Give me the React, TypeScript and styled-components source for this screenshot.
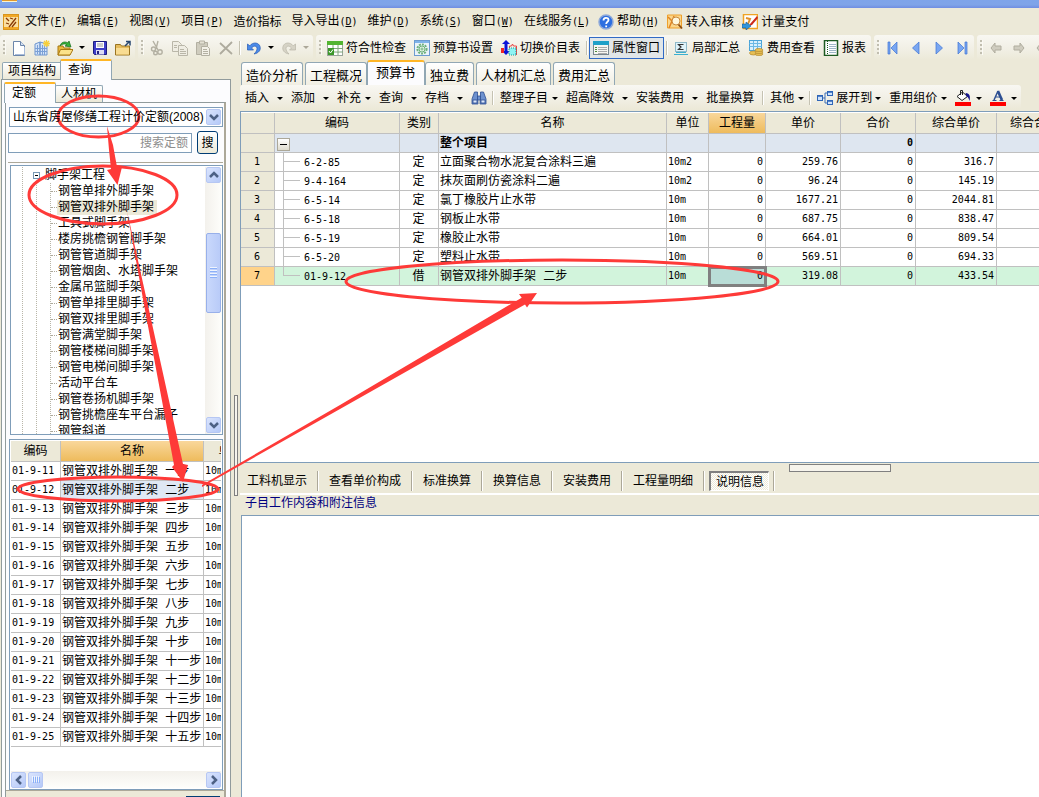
import React from "react";
import styled, { createGlobalStyle, css } from "styled-components";

const face = "#ece9d8";
const line = "#7f9db9";
const gridLine = "#c0c0c0";
const sans = `"Liberation Sans", "Noto Sans CJK SC", sans-serif`;
const mono = `"DejaVu Sans Mono", "Noto Sans CJK SC", monospace`;

const GlobalStyle = createGlobalStyle`
  * { box-sizing: border-box; }
  body { margin: 0; background: ${face}; overflow: hidden; }
  button, input, select { font: inherit; color: inherit; margin: 0; }
  button { background: none; border: 0; padding: 0; white-space: nowrap; }
  table { border-collapse: separate; border-spacing: 0; table-layout: fixed; }
  ul { list-style: none; margin: 0; padding: 0; }
`;

const Window = styled.div`
  position: relative;
  display: flex;
  flex-direction: column;
  height: 100vh;
  overflow: hidden;
  background: ${face};
  color: #000;
  font: 12px/16px ${sans};
  white-space: nowrap;
`;

const TitleBar = styled.div`
  flex: none;
  height: 8px;
  padding-left: 2px;
  background: linear-gradient(#7ea4ea, #7fa4e8 60%, #6f8de2);
`;

const TitleIcon = styled.div`
  width: 15px;
  height: 2px;
  background: #e39a2c;
  border-bottom: 1px solid #fff3c8;
`;

const MenuBar = styled.nav`
  flex: none;
  display: flex;
  align-items: center;
  gap: 10px;
  height: 27px;
  padding: 0 0 0 3px;
`;

const MenuIcon = styled.span`
  display: flex;
  width: 16px;
  margin-right: -4px;
`;

const MenuItem = styled.button<{ $icon?: boolean }>`
  display: flex;
  align-items: center;
  gap: 3px;
  margin-left: ${(p) => (p.$icon ? "-2px" : "0")};
`;

const Key = styled.span`
  font: 10px/16px ${mono};
  u { text-underline-offset: 1px; }
`;

const ToolBars = styled.div`
  flex: none;
  display: flex;
  gap: 3px;
  height: 25px;
`;

const raised = css`
  background: linear-gradient(#f8f7f2, #f1efe4 60%, ${face});
  border-radius: 3px;
`;

const ToolGroup = styled.div`
  ${raised}
  flex: none;
  display: flex;
  align-items: center;
  height: 25px;
  padding-right: 1px;
`;

const Grip = styled.span`
  width: 3px;
  height: 15px;
  margin: 0 1px 0 3px;
  background: repeating-linear-gradient(#c1beb0 0 2px, transparent 2px 4px);
  border-right: 1px solid #fbfaf5;
`;

const IconButton = styled.button`
  display: flex;
  justify-content: center;
  align-items: center;
  width: 23px;
  height: 23px;
`;

const CaretButton = styled.button`
  display: flex;
  justify-content: center;
  width: 12px;
`;

const LabelButton = styled.button<{ $on?: boolean }>`
  display: flex;
  align-items: center;
  gap: 3px;
  height: 22px;
  padding: 0 4px;
  ${(p) => p.$on && css`
    padding: 0 3px;
    background: #e1e6e8;
    border: 1px solid #316ac5;
  `}
`;

const Separator = styled.span`
  flex: none;
  width: 2px;
  height: 14px;
  margin: 0 1px 0 2px;
  background: #c5c2b2;
  border-right: 1px solid #fff;
`;

const Triangle = styled.span<{ $dim?: boolean }>`
  border: 3px solid transparent;
  border-top-color: ${(p) => (p.$dim ? "#aca899" : "#000")};
  border-bottom: 0;
`;

const Body = styled.main`
  flex: 1;
  display: flex;
  min-height: 0;
`;

const Left = styled.section`
  flex: none;
  display: flex;
  flex-direction: column;
  width: 231px;
`;

const TabRow = styled.div<{ $h: number; $pad: number }>`
  flex: none;
  display: flex;
  align-items: flex-end;
  height: ${(p) => p.$h}px;
  padding-left: ${(p) => p.$pad}px;
`;

const SideTab = styled.button<{ $on?: boolean; $tall?: boolean }>`
  height: 17px;
  padding: 0 5px;
  line-height: 16px;
  border: 1px solid #91a7b4;
  border-bottom: 0;
  border-radius: 2px 2px 0 0;
  background: linear-gradient(#fff, ${face});
  ${(p) => p.$on && css`
    position: relative;
    height: 21px;
    margin: 0 -1px -1px -2px;
    padding: 0 19px 1px 7px;
    background: #fcfcfe;
    border-top: 2px solid #ffb626;
  `}
`;

const SidePanel = styled.div`
  flex: 1;
  display: flex;
  flex-direction: column;
  min-height: 0;
  margin-left: 1px;
  padding: 0 4px 0 3px;
  border: 1px solid #919b9c;
  border-bottom: 0;
  background: #fcfcfe;
`;

const InnerPanel = styled.div`
  flex: 1;
  display: flex;
  flex-direction: column;
  min-height: 0;
  padding: 4px 1px 0 3px;
  border: 1px solid #919b9c;
  border-right: 2px solid #aca899;
  border-bottom: 0;
`;

const Combo = styled.div`
  flex: none;
  display: grid;
  grid-template-columns: 1fr 17px;
  height: 20px;
  border: 1px solid ${line};
  background: #fff;
  select {
    grid-area: 1 / 1 / 2 / 3;
    appearance: none;
    border: 0;
    padding: 0 18px 0 3px;
    background: transparent;
    z-index: 1;
  }
  span { grid-area: 1 / 2 / 2 / 3; margin: 1px; }
`;

const ScrollButton = styled.span`
  flex: none;
  display: flex;
  align-items: center;
  justify-content: center;
  width: 15px;
  height: 16px;
  border: 1px solid #b6c7f3;
  border-radius: 2px;
  background: linear-gradient(135deg, #dae4fd, #b5c9f8);
`;

const SearchRow = styled.div`
  flex: none;
  display: flex;
  align-items: center;
  gap: 5px;
  height: 23px;
  margin: 4px 5px 8px -1px;
  input {
    flex: 1;
    min-width: 0;
    height: 20px;
    padding: 0 3px;
    border: 1px solid ${line};
    background: #fff;
    text-align: right;
  }
  input::placeholder { color: #8e8e8e; opacity: 1; }
  button {
    width: 21px;
    height: 23px;
    border: 1px solid #003c74;
    border-radius: 3px;
    background: linear-gradient(#fff, ${face});
  }
`;

const TreeBox = styled.div`
  flex: 0 1 270px;
  display: flex;
  min-height: 0;
  margin: 2px 0 0 1px;
  padding-top: 1px;
  border: 1px solid ${line};
  background: #fff;
`;

const SideDivider = styled.div`
  flex: none;
  height: 1px;
  margin-left: -1px;
  background: #aca899;
`;

const dots = "repeating-linear-gradient(#b9b6a8 0 1px, transparent 1px 2px)";

const Tree = styled.ul`
  flex: 1;
  overflow: hidden;
  background: ${dots} 11px 0 / 1px 100% no-repeat, ${dots} 25px 16px / 1px 100% no-repeat, ${dots} 39px 16px / 1px 100% no-repeat;
`;

const TreeNode = styled.li<{ $root?: boolean }>`
  display: flex;
  align-items: center;
  height: 16px;
  padding-left: ${(p) => (p.$root ? 22 : 40)}px;
  ${(p) => !p.$root && css`
    &::before { content: ""; width: 6px; border-top: 1px dotted #aca899; }
  `}
`;

const NodeLabel = styled.span<{ $on?: boolean }>`
  height: 15px;
  line-height: 15px;
  padding: 0 3px 0 1px;
  background: ${(p) => (p.$on ? face : "transparent")};
`;

const Toggle = styled.span`
  display: flex;
  align-items: center;
  justify-content: center;
  width: 7px;
  height: 7px;
  margin-right: 5px;
  border: 1px solid #7898b5;
  background: #fff;
  &::before { content: ""; width: 3px; height: 1px; background: #000; }
`;

const VScroll = styled.div`
  flex: none;
  display: flex;
  flex-direction: column;
  justify-content: space-between;
  align-items: center;
  width: 17px;
  padding-bottom: 1px;
  background: linear-gradient(90deg, #f3f1ec, #fefefb);
`;

const VThumb = styled.span`
  display: flex;
  flex-direction: column;
  align-items: center;
  justify-content: center;
  gap: 1px;
  width: 15px;
  height: 80px;
  margin-top: -55px;
  border: 1px solid #98b0ea;
  border-radius: 2px;
  background: linear-gradient(90deg, #c9d8fc, #b9cbf8);
  i { width: 7px; height: 1px; background: #eef4fe; border-bottom: 1px solid #8cb0f8; box-sizing: content-box; }
`;

const ListBox = styled.div`
  flex: 1;
  display: flex;
  flex-direction: column;
  min-height: 0;
  margin-top: 4px;
  border: 1px solid ${line};
  padding: 1px;
  background: #fff;
`;

const ListView = styled.div`
  flex: 1;
  min-height: 0;
  overflow: hidden;
`;

const HScroll = styled.div`
  flex: none;
  display: flex;
  height: 17px;
  align-items: center;
  gap: 2px;
  background: linear-gradient(#f3f1ec, #fefefb);
  ${ScrollButton}:last-child { margin-left: auto; }
`;

const BottomStrip = styled.div`
  flex: none;
  display: flex;
  align-items: flex-end;
  justify-content: flex-end;
  height: 7px;
  margin: 0 -1px 0 -3px;
  padding-right: 4px;
  background: ${face};
  border-top: 1px solid #aca899;
  &::after { content: ""; width: 34px; height: 1px; background: #003c74; }
`;

const Table = styled.table`
  width: 0;
  min-width: 100%;
`;

const Th = styled.th<{ $on?: boolean }>`
  height: 21px;
  padding: 0;
  overflow: hidden;
  font-weight: 400;
  text-align: center;
  border: 0 solid ${gridLine};
  border-width: 0 1px 1px 0;
  background: ${(p) => (p.$on ? "linear-gradient(#f9d79b, #eebb5c)" : face)};
`;

const Td = styled.td<{ $mono?: boolean; $right?: boolean; $center?: boolean; $tone?: string; $focus?: boolean; $bold?: boolean }>`
  height: 19px;
  padding: 2px 2px 0 1px;
  overflow: hidden;
  border: 0 solid ${gridLine};
  border-width: 0 1px 1px 0;
  font: 12px/16px "Liberation Mono", "Noto Sans CJK SC", monospace;
  text-align: ${(p) => (p.$right ? "right" : p.$center ? "center" : "left")};
  background: ${(p) => p.$tone ?? "#fff"};
  ${(p) => p.$mono && css`
    padding-top: 0;
    font: 10px/16px ${mono};
  `}
  ${(p) => p.$bold && css`font-weight: 700;`}
  ${(p) => p.$focus && css`
    outline: 3px solid #808080;
    outline-offset: -2px;
  `}
`;

const VSplitter = styled.div`
  flex: none;
  width: 9px;
  padding: 335px 2px 0 3px;
  &::before {
    content: "";
    display: block;
    height: 99px;
    border: 1px solid #808080;
    background: #f6f4ec;
  }
`;

const Right = styled.section`
  flex: 1;
  display: flex;
  flex-direction: column;
  min-width: 0;
`;

const MainTabs = styled.div`
  flex: none;
  display: flex;
  align-items: flex-end;
  gap: 2px;
  height: 25px;
  padding-left: 1px;
`;

const MainTab = styled.button<{ $on?: boolean }>`
  height: 23px;
  padding: 3px 4px 0;
  font-size: 13px;
  border: 1px solid #91a7b4;
  border-bottom: 0;
  border-radius: 3px 3px 0 0;
  background: linear-gradient(#fff, #f0eee2);
  ${(p) => p.$on && css`
    height: 25px;
    margin: 0 -2px;
    padding: 0 9px 1px 8px;
    background: #fcfcfe;
    border-top: 2px solid #ffb626;
  `}
`;

const EditBar = styled.div`
  ${raised}
  flex: none;
  align-self: flex-start;
  display: flex;
  align-items: center;
  gap: 8px;
  height: 24px;
  margin-bottom: 2px;
  padding: 2px 4px 0 5px;
`;

const EditButton = styled.button<{ $gap?: number }>`
  display: flex;
  align-items: center;
  gap: ${(p) => p.$gap ?? 8}px;
`;

const BarRule = styled.span<{ $tight?: boolean }>`
  flex: none;
  width: 2px;
  height: 14px;
  margin: 0 -2px 0 ${(p) => (p.$tight ? "-3px" : "0")};
  background: #c5c2b2;
  border-right: 1px solid #fff;
`;

const IconLabel = styled.span`
  display: flex;
  align-items: center;
  gap: 3px;
`;

const GridArea = styled.div`
  flex: 1 1 352px;
  min-height: 0;
  overflow: hidden;
  padding-top: 1px;
  border: 1px solid ${line};
  border-right: 0;
  background: #fff;
`;

const CodeCell = styled.div`
  display: flex;
  align-items: center;
  height: 18px;
  padding: 2px 0 0 7px;
`;

const Branch = styled.span<{ $last?: boolean }>`
  align-self: flex-start;
  width: 17px;
  height: ${(p) => (p.$last ? 9 : 18)}px;
  margin: -2px 4px 0 0;
  border-left: 1px solid ${gridLine};
  background: linear-gradient(${gridLine}, ${gridLine}) 0 8px / 100% 1px no-repeat;
`;

const Collapse = styled.button`
  display: flex;
  align-items: center;
  justify-content: center;
  width: 13px;
  height: 13px;
  margin-left: 1px;
  border: 1px solid #aca899;
  background: linear-gradient(#fff, #dedbcd);
  &::before { content: ""; width: 7px; height: 1px; background: #000; }
`;

const Lower = styled.div`
  flex: 1 1 334px;
  display: flex;
  flex-direction: column;
  min-height: 0;
`;

const HSplitter = styled.div`
  flex: none;
  height: 8px;
  padding: 1px 0 0 549px;
  &::before {
    content: "";
    display: block;
    width: 100px;
    height: 6px;
    border: 1px solid #808080;
    background: #f6f4ec;
  }
`;

const InfoTabs = styled.div`
  flex: none;
  display: flex;
  align-items: center;
  height: 24px;
  padding: 0 0 4px;
  margin-left: -3px;
`;

const InfoTab = styled.button<{ $on?: boolean }>`
  height: 20px;
  padding: 0 10px;
  ${(p) => p.$on && css`
    margin: 0 4px;
    padding: 1px 4px 0 5px;
    border: 1px solid #fff;
    border-top: 2px solid #808080;
    border-left: 2px solid #808080;
    background: repeating-conic-gradient(#fff 0 25%, ${face} 0 50%) 0 0 / 2px 2px;
  `}
`;

const InfoRule = styled.span`
  width: 2px;
  height: 20px;
  background: #aca899;
  border-right: 1px solid #fff;
`;

const InfoTitle = styled.div`
  flex: none;
  height: 20px;
  padding: 0 0 0 5px;
  margin-top: -2px;
  box-sizing: content-box;
  border-top: 2px solid #fff;
  color: #000080;
`;

const InfoBody = styled.div`
  flex: 1;
  margin-left: 1px;
  border: 1px solid ${line};
  border-width: 1px 0 0 1px;
  background: #fff;
`;

const Marks = styled.svg`
  position: absolute;
  top: 0;
  left: 0;
  pointer-events: none;
`;

const icons: Record<string, React.ReactNode> = {
  app: <><rect x="0.5" y="0.5" width="15" height="15" fill="#fbe0a0" stroke="#d9951c" /><path d="M1 1h14v2H1zM1 13h14v2H1z" fill="#f2a826" /><path d="M3 4l3 3M6 13l7-9M7 4l3 1M9 13l4-5M3 9l3 1" stroke="#8a3a06" strokeWidth="1.300" /></>,
  file: <><path d="M2.5 1.5h7l4 4v10h-11z" fill="#fff" stroke="#6c86ab" /><path d="M9.500 1.500v4h4" fill="#d4e0f2" stroke="#6c86ab" /><path d="M4 14.500h9.500V7" fill="none" stroke="#a9bcda" /></>,
  building: <><path d="M1 4l5-2v13H1zM6 2l7 2v11H6z" fill="#d3e3f8" stroke="#6f96cf" /><path d="M3.500 5v9M8.500 5v10M10.500 5v10M1 8.500h12M1 11.500h12" stroke="#7ba0d6" /><path d="M12.500 0v7M9 3.500h7M10 1l5 5M15 1l-5 5" stroke="#f6cf3a" strokeWidth="1.300" /></>,
  open: <><path d="M1 6h5l1 2h6v7H1z" fill="#e8b93e" stroke="#a97812" /><path d="M3.500 9.500H16L13 15H1z" fill="#fbe28a" stroke="#a97812" /><path d="M3 6c1-4 5-5 8-3l1-2 2 6-6-1 2-1c-2-2-5-1-7 1z" fill="#37b53a" stroke="#146b18" strokeWidth=".7" /></>,
  save: <><path d="M1.500 1.500h13v13h-12l-1-1z" fill="#3e3ec8" stroke="#1d1d80" /><rect x="4" y="2" width="8" height="6" fill="#fff" /><path d="M5 4h6M5 6h6" stroke="#999" /><rect x="4" y="10" width="8" height="4.500" fill="#dcdcf4" /><rect x="5" y="11" width="2" height="3" fill="#222280" /></>,
  folder: <><path d="M.5 4.500h5l1 1.500h8v9H.5z" fill="#e6bc5c" stroke="#9a7420" /><path d="M1 8h13v6.500H1z" fill="#f8dc92" /><path d="M10 6l4-4m-3-.5h4v4" fill="none" stroke="#27476f" strokeWidth="1.500" /></>,
  cut: <g fill="none" stroke="#b3b0a2" strokeWidth="1.400"><path d="M4 1l5 9M9 1L7 9" /><circle cx="4.500" cy="9" r="2" /><circle cx="11" cy="12" r="2.200" /><circle cx="6.500" cy="13" r="1.800" /></g>,
  copy: <g fill="#efede3" stroke="#b9b6a8"><path d="M.5 1.500h6l3 3v7h-9z" /><path d="M6.500 5.500h6l3 3v7h-9z" /><path d="M8 9.500h4M8 11.500h6M8 13.500h6M2 5.500h3M2 7.500h3" /></g>,
  paste: <g fill="#e4e1d4" stroke="#b3b0a2"><path d="M1.500 2.500h11v12h-11z" fill="#cfccbe" /><path d="M4.500 1h5v3h-5z" /><path d="M6.500 6.500h6l2 2v7h-8z" fill="#f3f1e8" /><path d="M8 9.500h4M8 11.500h5M8 13.500h5" /></g>,
  del: <path d="M2 3l12 11M14 2L2 14" stroke="#aeab9e" strokeWidth="1.800" />,
  undo: <path d="M1.500 4v6h6L5.500 8C8 5 11 6 11 8.500c0 2-1 3.500-3 5.500 5-1 7-4 6-7.500C13 2.500 7 1.500 3.800 5.800z" fill="#4b8ae8" stroke="#2459b4" strokeWidth=".7" />,
  redo: <path d="M14.500 4v6h-6l2-2C8 5 5 6 5 8.500c0 2 1 3.500 3 5.500C3 13 1 10 2 6.500 3 2.500 9 1.500 12.200 5.800z" fill="#d6d3c6" stroke="#b9b6a8" strokeWidth=".7" />,
  check: <><rect x=".5" y="1.500" width="15" height="14" fill="#fff" stroke="#9aa59a" /><path d="M0 1h16v4H0z" fill="#52b431" /><path d="M6 5v10M11 5v10M6 8.500h10M6 12h10" stroke="#7fa77b" /><rect x="1" y="8" width="6" height="7" fill="#3c982a" /><path d="M2 11l1.500 2L6 9.500" fill="none" stroke="#fff" /></>,
  gear: <><rect x=".5" y=".5" width="15" height="15" fill="#eaf3fa" stroke="#6d9bd0" /><path d="M1 1h14v2H1z" fill="#7fb3ea" /><circle cx="8" cy="9" r="4.600" fill="none" stroke="#6fb27c" strokeWidth="2" strokeDasharray="2 1" /><circle cx="8" cy="9" r="3" fill="#e3f2e4" stroke="#6fb27c" /><circle cx="8" cy="9" r="1" fill="#fff" stroke="#6fb27c" /></>,
  swap: <><path d="M5 0l4 4H6.500v7H9l-4 4-4-4h2.500V4H1z" fill="#0a14d8" /><path d="M0 8h3v5H0z" fill="#ee2525" /><path d="M8.500 8V6h2l1-2 1 2h3v9" fill="none" stroke="#e84545" /><path d="M8 8h7v7H8z" fill="#8ff3f3" stroke="#139a9a" strokeDasharray="1 1" /></>,
  props: <><rect x=".5" y="1.500" width="15" height="13" fill="#f6f6f2" stroke="#7a8790" /><path d="M0 1h16v4H0z" fill="#1fa0c8" /><path d="M2 7.500h2M2 9.500h2M2 11.500h2" stroke="#4a8a3c" /><path d="M5 7.500h9M5 9.500h9M5 11.500h9M5 13.500h9" stroke="#aaa" /></>,
  sum: <><rect x="2.500" y="2.500" width="11" height="9" fill="#dff3fa" stroke="#8fb9c9" /><path d="M10.500 4.500h-5L8 7l-2.500 2.500h5" fill="none" stroke="#333" strokeWidth="1.200" /><path d="M1 14.500h14M3 12.500h10" stroke="#3bb0d0" /></>,
  coins: <><rect x="1.500" y=".5" width="12" height="10" fill="#d8effc" stroke="#4aa3d8" /><path d="M1.500 3.500h12M1.500 6.500h12M5.500 1v9M9.500 1v9" stroke="#6cb8e4" /><g fill="#e6bf55" stroke="#b58b30" strokeWidth=".7"><ellipse cx="5.500" cy="13" rx="4" ry="2" /><ellipse cx="11" cy="14" rx="4" ry="1.600" /><ellipse cx="11" cy="12" rx="4" ry="1.600" /><ellipse cx="11" cy="10" rx="4" ry="1.600" /></g></>,
  report: <><rect x="1.500" y=".5" width="13" height="15" fill="#fff" stroke="#1d5a22" strokeWidth="1.500" /><path d="M4.500 1v14" stroke="#1d5a22" strokeDasharray="1 1" /><path d="M6 4.500h7M6 6.500h7M6 8.500h7M6 10.500h7M6 12.500h7" stroke="#9fb6c8" /></>,
  first: <path d="M3 2h2v12H3zM12 2v12L6 8z" fill="#79a6f2" stroke="#3f74d2" strokeWidth=".7" />,
  prev: <path d="M11 2v12L4.500 8z" fill="#79a6f2" stroke="#3f74d2" strokeWidth=".7" />,
  next: <path d="M5 2v12l6.500-6z" fill="#79a6f2" stroke="#3f74d2" strokeWidth=".7" />,
  last: <path d="M11 2h2v12h-2zM4 2v12l6-6z" fill="#79a6f2" stroke="#3f74d2" strokeWidth=".7" />,
  back: <path d="M3 8l4-5v3h6v4H7v3z" fill="#cfccbf" stroke="#b0ad9f" />,
  fwd: <path d="M13 8L9 3v3H3v4h6v3z" fill="#cfccbf" stroke="#b0ad9f" />,
  help: <><circle cx="8" cy="8" r="7" fill="#2d6fe0" stroke="#8fa9d8" strokeWidth="1.500" /><path d="M5.500 6.500C5.500 3 10.500 3 10.500 6c0 1.800-2.300 1.800-2.300 4M8.200 11.500v1.700" fill="none" stroke="#fff" strokeWidth="1.800" /></>,
  audit: <><path d="M.5 1h14v13H.5z" fill="#fbd68a" stroke="#efa02a" /><path d="M1 3l4 4-3 7M7 2L5 8" fill="none" stroke="#e08422" strokeWidth="1.500" /><circle cx="9" cy="7" r="4" fill="#fff7dc" stroke="#c98a3c" /><path d="M11.500 10.500l3.500 4" stroke="#8b4c12" strokeWidth="1.800" /></>,
  pay: <><rect x="1.500" y=".5" width="14" height="14" fill="#fff" stroke="#f0a322" strokeWidth="1.500" /><path d="M4 4l4 1-2 5" fill="none" stroke="#e0902c" strokeWidth="2" /><path d="M15 2l-7 8-1 2 3-1 6-7z" fill="#cc2a1c" /><path d="M0 10h4V8l5 4-5 4v-2H0z" fill="#2f95dc" stroke="#14588f" strokeWidth=".6" /></>,
  find: <g fill="#6d91cf" stroke="#2d4f92" strokeWidth=".8"><path d="M3.500 2h3v4l.5 8H1V9zM12.500 2h-3v4L9 14h6V9z" /><path d="M6.500 6h3v4h-3z" /><path d="M2 10h4v3H2zM10 10h4v3h-4z" fill="#dbe7fb" /></g>,
  expand: <><path d="M5 8h3M8 3v10M8 3h3M8 13h3" stroke="#3d6fb8" fill="none" /><g fill="#cfe2fb" stroke="#2f66b8"><rect x=".5" y="5.500" width="5" height="5" /><rect x="10.500" y="1.500" width="5" height="4" /><rect x="10.500" y="10.500" width="5" height="4" /></g><path d="M1 6h5M10 2h6M10 11h6" stroke="#2f66b8" strokeWidth="1.500" /></>,
  fill: <><path d="M2 6.500L7.500 2l5 4.500-5.500 4z" fill="#fff" stroke="#222" /><path d="M5.500 5V.5h2V5" fill="none" stroke="#222" /><path d="M10.500 3c4.500 0 5 4 4 8-1-3-1.500-4-3-4.500z" fill="#14148c" /><path d="M0 12h16v4H0z" fill="#f00" /></>,
  font: <><path d="M8 1L4 10M7.500 1l4 9" stroke="#2d4f92" strokeWidth="1.500" /><path d="M8 1l4 9" stroke="#2d4f92" strokeWidth="2.500" /><path d="M5.500 7h5M2.500 10.500h4M9.500 10.500h4" stroke="#2d4f92" /><path d="M0 12h16v4H0z" fill="#f00" /></>,
};

const Icon = ({ name }: { name: string }) => (
  <svg width="16" height="16" viewBox="0 0 16 16" aria-hidden="true">{icons[name]}</svg>
);

const chevrons = { down: "M1 3l4 4 4-4", up: "M1 7l4-4 4 4", left: "M7 1L3 5l4 4", right: "M3 1l4 4-4 4" };
const Chevron = ({ dir }: { dir: keyof typeof chevrons }) => (
  <svg width="10" height="10" aria-hidden="true"><path d={chevrons[dir]} fill="none" stroke="#4d6185" strokeWidth="2.500" /></svg>
);

const menus: { label: string; key?: string; icon?: string }[] = [
  { label: "文件", key: "F" }, { label: "编辑", key: "E" }, { label: "视图", key: "V" }, { label: "项目", key: "P" },
  { label: "造价指标" }, { label: "导入导出", key: "D" }, { label: "维护", key: "D" }, { label: "系统", key: "S" },
  { label: "窗口", key: "W" }, { label: "在线服务", key: "L" }, { label: "帮助", key: "H", icon: "help" },
  { label: "转入审核", icon: "audit" }, { label: "计量支付", icon: "pay" },
];

const treeNodes = [
  "钢管单排外脚手架", "钢管双排外脚手架", "工具式脚手架", "楼房挑檐钢管脚手架", "钢管管道脚手架", "钢管烟囱、水塔脚手架",
  "金属吊篮脚手架", "钢管单排里脚手架", "钢管双排里脚手架", "钢管满堂脚手架", "钢管楼梯间脚手架", "钢管电梯间脚手架",
  "活动平台车", "钢管卷扬机脚手架", "钢管挑檐座车平台漏子", "钢管斜道",
];

const steps = ["一", "二", "三", "四", "五", "六", "七", "八", "九", "十", "十一", "十二", "十三", "十四", "十五"];

const columns: [string, number][] = [
  ["", 34], ["编码", 125], ["类别", 39], ["名称", 228], ["单位", 42], ["工程量", 57], ["单价", 75], ["合价", 75], ["综合单价", 81], ["综合合价", 75],
];

const items = [
  ["6-2-85", "定", "立面聚合物水泥复合涂料三遍", "10m2", "259.76", "316.7"],
  ["9-4-164", "定", "抹灰面刷仿瓷涂料二遍", "10m2", "96.24", "145.19"],
  ["6-5-14", "定", "氯丁橡胶片止水带", "10m", "1677.21", "2044.81"],
  ["6-5-18", "定", "钢板止水带", "10m", "687.75", "838.47"],
  ["6-5-19", "定", "橡胶止水带", "10m", "664.01", "809.54"],
  ["6-5-20", "定", "塑料止水带", "10m", "569.51", "694.33"],
  ["01-9-12", "借", "钢管双排外脚手架 二步", "10m", "319.08", "433.54"],
];

const Tool = ({ name, label }: { name: string; label: string }) => (
  <IconButton aria-label={label}><Icon name={name} /></IconButton>
);
const Caret = ({ dim }: { dim?: boolean }) => (
  <CaretButton aria-label="更多"><Triangle $dim={dim} /></CaretButton>
);
const Labelled = ({ name, text, on }: { name: string; text: string; on?: boolean }) => (
  <LabelButton $on={on}><Icon name={name} />{text}</LabelButton>
);
const Drop = ({ text, gap }: { text: string; gap?: number }) => (
  <EditButton $gap={gap}>{text}<Triangle /></EditButton>
);

const BudgetGrid = () => {
  const head = "#dee6f0";
  return (
    <Table>
      <colgroup>{columns.map(([n, w]) => <col key={n} width={w} />)}</colgroup>
      <thead>
        <tr>{columns.map(([n]) => <Th key={n} $on={n === "工程量"}>{n}</Th>)}</tr>
      </thead>
      <tbody>
        <tr>
          <Td $tone={face} />
          <Td $tone={head}><Collapse aria-label="折叠" /></Td>
          <Td $tone={head} />
          <Td $tone={head} $bold>整个项目</Td>
          <Td $tone={head} /><Td $tone={head} /><Td $tone={head} />
          <Td $tone={head} $mono $right $bold>0</Td>
          <Td $tone={head} /><Td $tone={head} />
        </tr>
        {items.map(([code, kind, name, unit, price, total], i) => {
          const last = i === items.length - 1;
          const tone = last ? "#d2f4dc" : "#fff";
          return (
            <tr key={code}>
              <Td $mono $center $tone={last ? "#ffd38a" : face}>{i + 1}</Td>
              <Td $mono $tone={tone}><CodeCell><Branch $last={last} />{code}</CodeCell></Td>
              <Td $center $tone={tone}>{kind}</Td>
              <Td $tone={tone}>{name}</Td>
              <Td $mono $tone={tone}>{unit}</Td>
              <Td $mono $right $tone={last ? "#b9ddd7" : tone} $focus={last}>0</Td>
              <Td $mono $right $tone={tone}>{price}</Td>
              <Td $mono $right $tone={tone}>0</Td>
              <Td $mono $right $tone={tone}>{total}</Td>
              <Td $tone={tone} />
            </tr>
          );
        })}
      </tbody>
    </Table>
  );
};

const Sidebar = () => (
  <Left>
    <TabRow $h={19} $pad={2}>
      <SideTab>项目结构</SideTab>
      <SideTab $on>查询</SideTab>
    </TabRow>
    <SidePanel>
      <TabRow $h={22} $pad={1}>
        <SideTab $on>定额</SideTab>
        <SideTab>人材机</SideTab>
      </TabRow>
      <InnerPanel>
        <Combo>
          <select aria-label="定额库"><option>山东省房屋修缮工程计价定额(2008)</option></select>
          <ScrollButton><Chevron dir="down" /></ScrollButton>
        </Combo>
        <SearchRow>
          <input aria-label="搜索定额" placeholder="搜索定额" />
          <button>搜</button>
        </SearchRow>
        <SideDivider />
        <TreeBox>
          <Tree>
            <TreeNode $root><Toggle />脚手架工程</TreeNode>
            {treeNodes.map((n, i) => <TreeNode key={n}><NodeLabel $on={i === 1}>{n}</NodeLabel></TreeNode>)}
          </Tree>
          <VScroll>
            <ScrollButton><Chevron dir="up" /></ScrollButton>
            <VThumb><i /><i /><i /><i /></VThumb>
            <ScrollButton><Chevron dir="down" /></ScrollButton>
          </VScroll>
        </TreeBox>
        <ListBox>
          <ListView>
            <Table>
              <colgroup><col width={50} /><col width={143} /><col width={54} /></colgroup>
              <thead><tr><Th>编码</Th><Th $on>名称</Th><Th>单位</Th></tr></thead>
              <tbody>
                {steps.map((s, i) => (
                  <tr key={s}>
                    <Td $mono>01-9-{i + 11}</Td>
                    <Td $tone={i === 1 ? "#dfe8f4" : undefined}>钢管双排外脚手架 {s}步</Td>
                    <Td $mono>10m</Td>
                  </tr>
                ))}
              </tbody>
            </Table>
          </ListView>
          <HScroll>
            <ScrollButton><Chevron dir="left" /></ScrollButton>
            <ScrollButton>
              <svg width="8" height="7" aria-hidden="true"><path d="M.5 0v6M2.500 0v6M4.500 0v6M6.500 0v6" stroke="#eef4fe" /><path d="M1.500 1v6M3.500 1v6M5.500 1v6M7.500 1v6" stroke="#8cb0f8" /></svg>
            </ScrollButton>
            <ScrollButton><Chevron dir="right" /></ScrollButton>
          </HScroll>
        </ListBox>
        <BottomStrip />
      </InnerPanel>
    </SidePanel>
  </Left>
);

const infoTabs = ["工料机显示", "查看单价构成", "标准换算", "换算信息", "安装费用", "工程量明细", "说明信息"];

export default function App() {
  return (
    <Window>
      <GlobalStyle />
      <TitleBar><TitleIcon /></TitleBar>
      <MenuBar>
        <MenuIcon><Icon name="app" /></MenuIcon>
        {menus.map((m) => (
          <MenuItem key={m.label} $icon={!!m.icon}>
            {m.icon && <Icon name={m.icon} />}
            <span>{m.label}{m.key && <Key>(<u>{m.key}</u>)</Key>}</span>
          </MenuItem>
        ))}
      </MenuBar>
      <ToolBars>
        <ToolGroup>
          <Grip /><Tool name="file" label="新建" /><Tool name="building" label="新建项目" /><Tool name="open" label="打开" /><Caret />
          <Tool name="save" label="保存" /><Tool name="folder" label="目录" />
        </ToolGroup>
        <ToolGroup>
          <Grip /><Tool name="cut" label="剪切" /><Tool name="copy" label="复制" /><Tool name="paste" label="粘贴" /><Tool name="del" label="删除" />
          <Separator /><Tool name="undo" label="撤销" /><Caret /><Tool name="redo" label="恢复" /><Caret dim />
        </ToolGroup>
        <ToolGroup>
          <Grip /><Labelled name="check" text="符合性检查" /><Labelled name="gear" text="预算书设置" /><Labelled name="swap" text="切换价目表" />
          <Separator /><Labelled name="props" text="属性窗口" on /><Separator />
          <Labelled name="sum" text="局部汇总" /><Labelled name="coins" text="费用查看" /><Labelled name="report" text="报表" />
        </ToolGroup>
        <ToolGroup>
          <Grip /><Tool name="first" label="首行" /><Tool name="prev" label="上一行" /><Tool name="next" label="下一行" /><Tool name="last" label="末行" />
        </ToolGroup>
        <ToolGroup>
          <Grip /><Tool name="back" label="后退" /><Tool name="fwd" label="前进" /><Tool name="back" label="升级" />
        </ToolGroup>
      </ToolBars>
      <Body>
        <Sidebar />
        <VSplitter />
        <Right>
          <MainTabs>
            <MainTab>造价分析</MainTab><MainTab>工程概况</MainTab><MainTab $on>预算书</MainTab>
            <MainTab>独立费</MainTab><MainTab>人材机汇总</MainTab><MainTab>费用汇总</MainTab>
          </MainTabs>
          <EditBar>
            <Drop text="插入" /><Drop text="添加" /><Drop text="补充" gap={4} /><Drop text="查询" /><Drop text="存档" />
            <EditButton aria-label="查找"><Icon name="find" /></EditButton>
            <BarRule $tight />
            <Drop text="整理子目" gap={4} /><Drop text="超高降效" /><Drop text="安装费用" />
            <EditButton>批量换算</EditButton>
            <BarRule />
            <Drop text="其他" gap={4} />
            <BarRule $tight />
            <EditButton $gap={3}><IconLabel><Icon name="expand" />展开到</IconLabel><Triangle /></EditButton>
            <Drop text="重用组价" gap={4} />
            <EditButton aria-label="填充颜色" $gap={5}><Icon name="fill" /><Triangle /></EditButton>
            <EditButton aria-label="字体颜色" $gap={5}><Icon name="font" /><Triangle /></EditButton>
          </EditBar>
          <GridArea><BudgetGrid /></GridArea>
          <Lower>
            <HSplitter />
            <InfoTabs>
              {infoTabs.map((t, i) => (
                <React.Fragment key={t}><InfoTab $on={i === infoTabs.length - 1}>{t}</InfoTab><InfoRule /></React.Fragment>
              ))}
            </InfoTabs>
            <InfoTitle>子目工作内容和附注信息</InfoTitle>
            <InfoBody />
          </Lower>
        </Right>
      </Body>
      <Marks width="1039" height="797" aria-hidden="true">
        <g fill="none" stroke="#fe3a38" strokeWidth="3">
          <ellipse cx="98.500" cy="116.500" rx="40.500" ry="20.500" />
          <ellipse cx="103" cy="195" rx="74" ry="29" />
          <ellipse cx="118" cy="489" rx="100" ry="12" />
          <ellipse cx="562" cy="281.500" rx="216" ry="21.500" />
        </g>
        <g fill="#fe3a38">
          <path d="M107 126L109 150 111 169 107 170 117.500 185 122 167 117 167 113 145z" />
          <path d="M127 211L145 310 174 465 172 467 183 482 188 465 183 464 149 310z" />
          <path d="M202 485L340 405 521.700 297.700 519 294 537 293 527 307.500 525 304.500 340 409 202 487z" />
        </g>
      </Marks>
    </Window>
  );
}
